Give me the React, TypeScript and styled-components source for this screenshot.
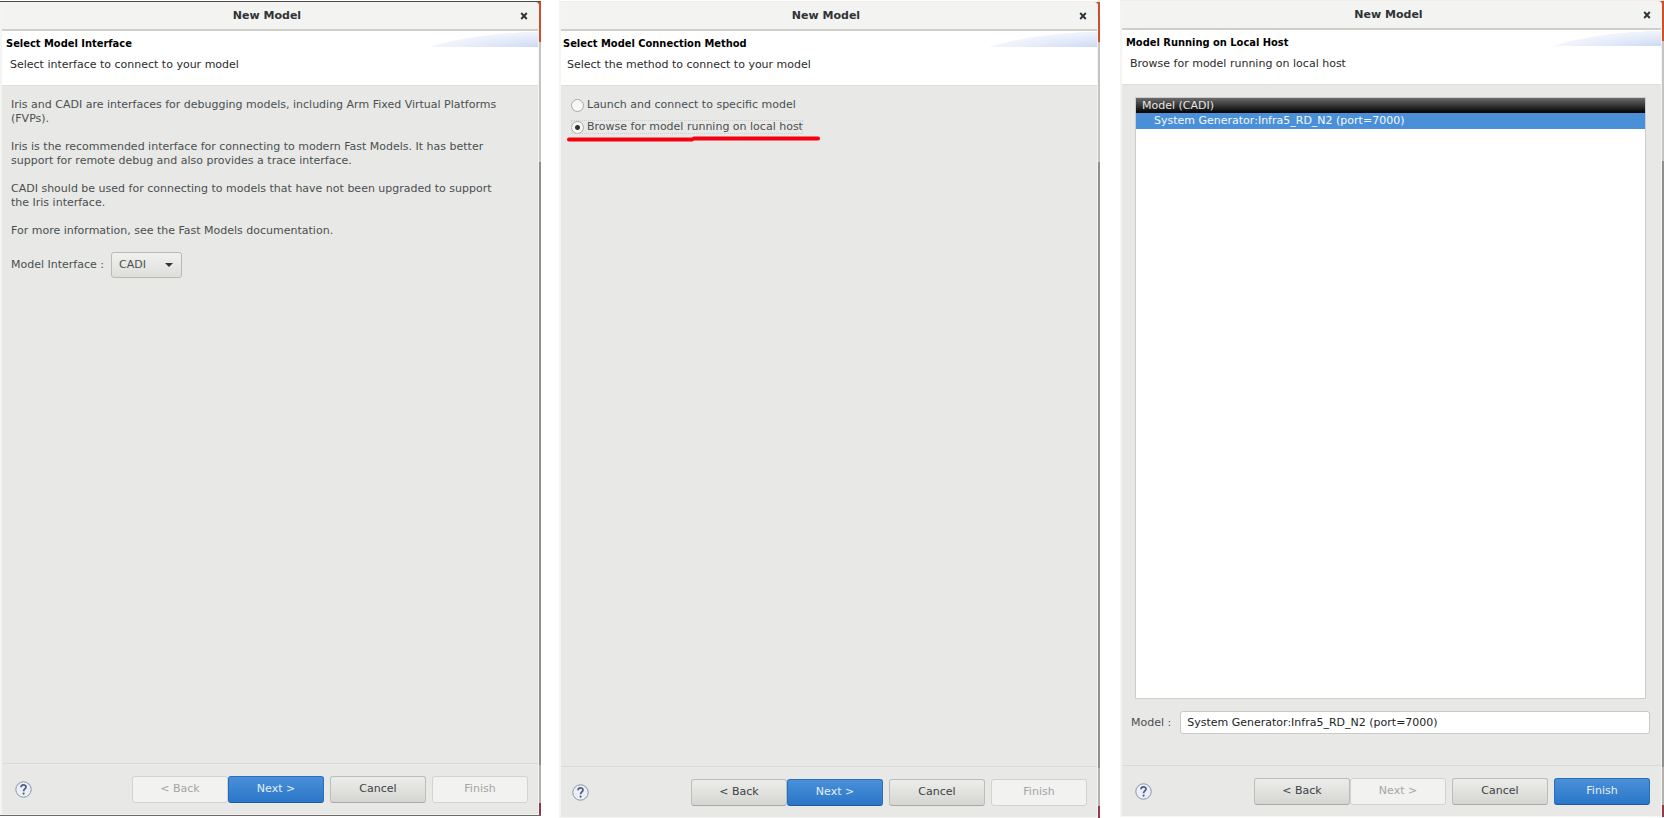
import React, { useId, useState } from "react";
import styled, { createGlobalStyle, css } from "styled-components";

const GlobalStyle = createGlobalStyle`
  *, *::before, *::after { box-sizing: border-box; }
  body { margin: 0; background: #ffffff; }
  body, button, input, select, table {
    font-family: "DejaVu Sans", Verdana, sans-serif;
    font-size: 11px;
    line-height: 14px;
  }
`;

const Page = styled.main`
  display: grid;
  grid-template-columns: 541fr 18px 541fr 20px 544fr;
  min-height: 100vh;
  & > :nth-child(2) { grid-column: 3; }
  & > :nth-child(3) { grid-column: 5; }
`;

type Edge = "dark" | "plain" | "light";

const Backdrop = styled.div<{ $top: number; $bottom: number; $edge: Edge }>`
  display: flex;
  margin: ${(p) => p.$top}px 0 ${(p) => p.$bottom}px;
  padding-right: 2px;
  border-top: 1px solid ${(p) => (p.$edge === "dark" ? "#4c4a48" : "#f4ece9")};
  border-bottom: ${(p) => (p.$edge === "dark" ? "1px solid #6c6866" : "0")};
  background: linear-gradient(
    #cf4f2c 0 40px,
    #c4c4c4 40px 160px,
    #8f8f8f 160px calc(100% - 50px),
    #b4b0b0 calc(100% - 50px) calc(100% - 12px),
    #94394a calc(100% - 12px)
  );
`;

const Dialog = styled.section`
  flex: 1;
  min-width: 0;
  display: flex;
  flex-direction: column;
  background: #e8e8e6;
  border: solid #f4f4f3;
  border-width: 0 1px 1px 2px;
  border-radius: 0 4px 0 0;
`;

const TitleBar = styled.header`
  display: grid;
  grid-template-columns: 22px 1fr 28px;
  align-items: center;
  height: 29px;
  background: #f3f3f2;
  border-bottom: 2px solid #cfcfc9;
  border-radius: 0 4px 0 0;
`;

const WindowTitle = styled.h1`
  grid-column: 2;
  margin: 0;
  font-size: 11px;
  line-height: 14px;
  text-align: center;
  color: #2e3436;
`;

const CloseButton = styled.button`
  display: grid;
  place-items: center;
  height: 24px;
  padding: 0;
  border: 0;
  background: none;
`;

const Banner = styled.div`
  display: flex;
  justify-content: space-between;
  height: 55px;
  background: #ffffff;
  border-bottom: 1px solid #dededb;
`;

const BannerText = styled.div<{ $start: number }>`
  padding: 6px 0 0 ${(p) => p.$start}px;
  color: #000000;
`;

const BannerTitle = styled.h2`
  margin: 0;
  font-family: "DejaVu Sans Condensed", "DejaVu Sans", sans-serif;
  font-size: 11px;
  line-height: 14px;
`;

const BannerHint = styled.p`
  margin: 7px 0 0 4px;
  color: #2b2b2b;
`;

const Body = styled.div`
  flex: 1;
  display: flex;
  flex-direction: column;
  padding: 12px 11px 0 9px;
  color: #4a4f50;
`;

const Paragraph = styled.p`
  margin: 0 20px 14px 0;
`;

const FieldRow = styled.div`
  display: flex;
  align-items: center;
  gap: 7px;
`;

const SelectWrap = styled.span`
  position: relative;
  display: flex;
  & > svg {
    position: absolute;
    right: 9px;
    top: 11px;
    pointer-events: none;
  }
`;

const Select = styled.select`
  appearance: none;
  width: 71px;
  height: 26px;
  padding: 0 20px 0 7px;
  border: 1px solid #b9b9b5;
  border-radius: 3px;
  background: linear-gradient(#f1f1f0, #dededb);
  color: #4a4f50;
`;

const RadioList = styled.fieldset`
  display: flex;
  flex-direction: column;
  align-items: flex-start;
  gap: 8px;
  margin: 0;
  padding: 0 0 0 1px;
  border: 0;
`;

const RadioLabel = styled.label`
  display: flex;
  align-items: center;
  gap: 3px;
  &:has(:checked) {
    outline: 1px dotted #cfcfcc;
    outline-offset: -1px;
  }
`;

const Radio = styled.input`
  appearance: none;
  width: 13px;
  height: 13px;
  margin: 0;
  border: 1px solid #a9a9a6;
  border-radius: 50%;
  background: #f7f7f6;
  &:checked {
    background: radial-gradient(circle, #2e3436 0 2px, #f7f7f6 3px);
  }
`;

const Underline = styled.svg`
  display: block;
  margin: 1px 0 0 -3px;
`;

const ListFrame = styled.div`
  flex: 1;
  margin: 0 4px;
  border: 1px solid #cdcdca;
  background: #ffffff;
`;

const ModelTable = styled.table`
  width: 100%;
  border-collapse: collapse;
  th, td { padding: 0; text-align: left; font-weight: normal; }
  th {
    height: 15px;
    padding-left: 6px;
    background: linear-gradient(#6a6a6a, #000000);
    color: #e4e4e4;
  }
  td {
    height: 16px;
    padding-left: 18px;
    background: #4a90d9;
    color: #f4f8fc;
  }
`;

const ModelRow = styled.div`
  display: flex;
  align-items: center;
  gap: 9px;
  margin: 12px 0 31px;
`;

const TextInput = styled.input`
  flex: 1;
  min-width: 0;
  height: 23px;
  padding: 0 6px;
  border: 1px solid #c8c8c4;
  border-radius: 3px;
  background: #ffffff;
  color: #202426;
`;

const Footer = styled.footer<{ $start: number; $end: number }>`
  display: flex;
  align-items: center;
  justify-content: space-between;
  height: 51px;
  padding: 0 ${(p) => p.$end}px 0 ${(p) => p.$start}px;
  border-top: 1px solid #dadad7;
`;

const HelpButton = styled.button`
  display: flex;
  padding: 0;
  border: 0;
  background: none;
`;

const ButtonBar = styled.div`
  display: flex;
  gap: 6px;
`;

const ButtonPair = styled.div`
  display: flex;
`;

const PushButton = styled.button<{ $primary?: boolean }>`
  width: 96px;
  height: 27px;
  padding: 0;
  border: 1px solid #bdbdb9;
  border-bottom-color: #a9a9a5;
  border-radius: 3px;
  background: linear-gradient(#ededec, #d5d5d1);
  color: #3c4244;
  &:disabled {
    border-color: #d2d2ce;
    background: #f2f2f1;
    color: #a3a5a5;
  }
  ${(p) =>
    p.$primary &&
    css`
      border-color: #2a6db8;
      border-bottom-color: #1f5c9f;
      background: linear-gradient(#4a90d9, #2a76c8);
      color: #e6eff9;
    `}
`;

function CloseIcon() {
  return (
    <svg width="8" height="8" viewBox="0 0 8 8" aria-hidden="true">
      <path d="M1.2 1L6.8 7M6.8 1L1.2 7" stroke="#2e3436" strokeWidth="1.9" />
    </svg>
  );
}

function Wave() {
  const id = useId();
  return (
    <svg width="108" height="16" viewBox="0 0 108 16" aria-hidden="true">
      <defs>
        <linearGradient id={id}>
          <stop offset="0" stopColor="#f3f6fd" />
          <stop offset="1" stopColor="#cdd9f4" />
        </linearGradient>
        <linearGradient id={`${id}-fade`} x1="0" y1="0" x2="0" y2="1">
          <stop offset="0" stopColor="#ffffff" stopOpacity="0.7" />
          <stop offset="1" stopColor="#ffffff" stopOpacity="0" />
        </linearGradient>
      </defs>
      <path d="M0 16C22 9 60 2 108 1V16Z" fill={`url(#${id})`} />
      <path d="M0 16C22 9 60 2 108 1V16Z" fill={`url(#${id}-fade)`} />
    </svg>
  );
}

function HelpIcon() {
  return (
    <svg width="17" height="17" viewBox="0 0 17 17" fill="none" aria-hidden="true">
      <circle cx="8.5" cy="8.5" r="7.7" fill="#eceff3" stroke="#8794ad" />
      <path d="M6 6.3C6 3 11 3.1 11 6C11 8 8.6 7.9 8.6 10.3" stroke="#4d5f86" strokeWidth="1.8" />
      <circle cx="8.6" cy="12.6" r="1.1" fill="#4d5f86" />
    </svg>
  );
}

interface WizardProps {
  title: string;
  hint: string;
  top: number;
  bottom: number;
  edge: Edge;
  start: number;
  end: number;
  disabled: string[];
  primary: string;
  children: React.ReactNode;
}

function Wizard({ title, hint, top, bottom, edge, start, end, disabled, primary, children }: WizardProps) {
  const button = (name: string) => (
    <PushButton type="button" disabled={disabled.includes(name)} $primary={primary === name}>
      {name}
    </PushButton>
  );
  return (
    <Backdrop $top={top} $bottom={bottom} $edge={edge}>
      <Dialog>
        <TitleBar>
          <WindowTitle>New Model</WindowTitle>
          <CloseButton type="button" aria-label="Close">
            <CloseIcon />
          </CloseButton>
        </TitleBar>
        <Banner>
          <BannerText $start={start}>
            <BannerTitle>{title}</BannerTitle>
            <BannerHint>{hint}</BannerHint>
          </BannerText>
          <Wave />
        </Banner>
        {children}
        <Footer $start={start + 9} $end={end}>
          <HelpButton type="button" aria-label="Help">
            <HelpIcon />
          </HelpButton>
          <ButtonBar>
            <ButtonPair>
              {button("< Back")}
              {button("Next >")}
            </ButtonPair>
            {button("Cancel")}
            {button("Finish")}
          </ButtonBar>
        </Footer>
      </Dialog>
    </Backdrop>
  );
}

export default function App() {
  const [method, setMethod] = useState("browse");
  const [model, setModel] = useState("System Generator:Infra5_RD_N2 (port=7000)");
  return (
    <>
      <GlobalStyle />
      <Page>
        <Wizard
          title="Select Model Interface"
          hint="Select interface to connect to your model"
          top={1} bottom={2} edge="dark" start={4} end={10}
          disabled={["< Back", "Finish"]}
          primary="Next >"
        >
          <Body>
            <Paragraph>
              Iris and CADI are interfaces for debugging models, including Arm Fixed Virtual Platforms (FVPs).
            </Paragraph>
            <Paragraph>
              Iris is the recommended interface for connecting to modern Fast Models. It has better support for remote debug and also provides a trace interface.
            </Paragraph>
            <Paragraph>
              CADI should be used for connecting to models that have not been upgraded to support the Iris interface.
            </Paragraph>
            <Paragraph>For more information, see the Fast Models documentation.</Paragraph>
            <FieldRow>
              <label htmlFor="interface">Model Interface :</label>
              <SelectWrap>
                <Select id="interface" defaultValue="CADI">
                  <option>CADI</option>
                  <option>Iris</option>
                </Select>
                <svg width="8" height="4" viewBox="0 0 8 4" aria-hidden="true">
                  <path d="M0 0H8L4 4Z" fill="#2e3436" />
                </svg>
              </SelectWrap>
            </FieldRow>
          </Body>
        </Wizard>

        <Wizard
          title="Select Model Connection Method"
          hint="Select the method to connect to your model"
          top={1} bottom={0} edge="plain" start={2} end={10}
          disabled={["Finish"]}
          primary="Next >"
        >
          <Body>
            <RadioList aria-label="Connection method">
              <RadioLabel>
                <Radio type="radio" name="method" checked={method === "launch"} onChange={() => setMethod("launch")} />
                Launch and connect to specific model
              </RadioLabel>
              <RadioLabel>
                <Radio type="radio" name="method" checked={method === "browse"} onChange={() => setMethod("browse")} />
                Browse for model running on local host
              </RadioLabel>
            </RadioList>
            <Underline width="253" height="7" viewBox="0 0 253 7" fill="none" stroke="#f5000f" strokeWidth="4" strokeLinecap="round" aria-hidden="true">
              <path d="M2 4.5H125M127 3.5H251" />
            </Underline>
          </Body>
        </Wizard>

        <Wizard
          title="Model Running on Local Host"
          hint="Browse for model running on local host"
          top={0} bottom={1} edge="light" start={4} end={11}
          disabled={["Next >"]}
          primary="Finish"
        >
          <Body>
            <ListFrame>
              <ModelTable>
                <thead>
                  <tr><th>Model (CADI)</th></tr>
                </thead>
                <tbody>
                  <tr><td>System Generator:Infra5_RD_N2 (port=7000)</td></tr>
                </tbody>
              </ModelTable>
            </ListFrame>
            <ModelRow>
              <label htmlFor="model">Model :</label>
              <TextInput id="model" value={model} onChange={(e) => setModel(e.target.value)} />
            </ModelRow>
          </Body>
        </Wizard>
      </Page>
    </>
  );
}
